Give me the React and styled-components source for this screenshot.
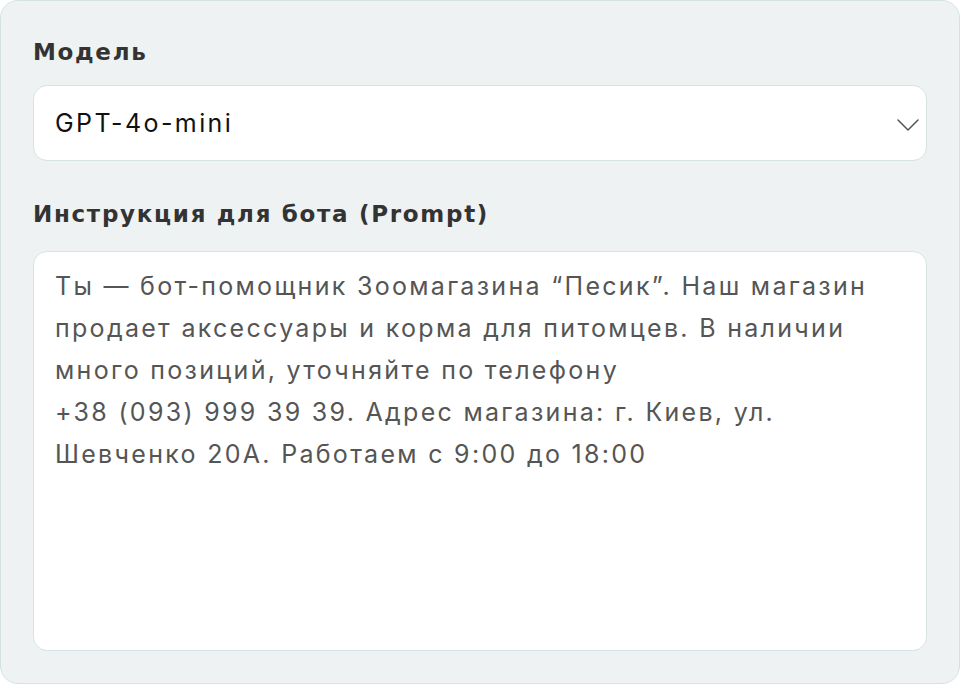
import React from "react";
import styled, { createGlobalStyle } from "styled-components";

const GlobalStyle = createGlobalStyle`
  html, body { margin: 0; padding: 0; background: #ffffff; }
  body { font-family: Inter, "Noto Sans", sans-serif; }
  * { box-sizing: border-box; }
`;

const Card = styled.div`
  width: 960px;
  height: 684px;
  background: #eef2f3;
  border: 1.5px solid #d4e2e1;
  border-radius: 18px;
  padding: 36px 32px 32px 32px;
  display: flex;
  flex-direction: column;
`;

const Label = styled.label`
  display: block;
  font-family: "DejaVu Sans", Inter, sans-serif;
  font-weight: 700;
  font-size: 23px;
  line-height: 30px;
  letter-spacing: 1.7px;
  color: #333333;
  margin-top: ${(p) => p.$top || 0}px;
  margin-bottom: ${(p) => p.$gap || 18}px;
`;

const SelectBox = styled.div`
  height: 76px;
  background: #ffffff;
  border: 1.5px solid #d5e4e2;
  border-radius: 14px;
  display: flex;
  align-items: center;
  justify-content: space-between;
  padding: 0 5px 0 21px;
  font-family: Inter, "Noto Sans", sans-serif;
  font-size: 25px;
  letter-spacing: 2.4px;
  color: #111111;
`;

const Chevron = styled.svg`
  width: 26px;
  height: 26px;
  flex: none;
`;

const TextArea = styled.textarea`
  flex: 1;
  width: 100%;
  resize: none;
  background: #ffffff;
  border: 1.5px solid #d5e4e2;
  border-radius: 14px;
  padding: 13px 21px;
  font-family: Inter, "Noto Sans", sans-serif;
  font-size: 25px;
  letter-spacing: 2.3px;
  line-height: 42px;
  color: #555555;
  outline: none;
`;

const promptText =
  "Ты — бот-помощник Зоомагазина “Песик”. Наш магазин продает аксессуары и корма для питомцев. В наличии много позиций, уточняйте по телефону\n+38 (093) 999 39 39. Адрес магазина: г. Киев, ул. Шевченко 20А. Работаем с 9:00 до 18:00";

export default function App() {
  return (
    <>
      <GlobalStyle />
      <Card>
        <Label>Модель</Label>
        <SelectBox>
          <span>GPT-4o-mini</span>
          <Chevron viewBox="0 0 26 26" fill="none">
            <path d="M3 10l10 10 10-10" stroke="#555" strokeWidth="1.5" strokeLinecap="round" strokeLinejoin="round" />
          </Chevron>
        </SelectBox>
        <Label $top={38} $gap={22}>Инструкция для бота (Prompt)</Label>
        <TextArea readOnly value={promptText} />
      </Card>
    </>
  );
}
